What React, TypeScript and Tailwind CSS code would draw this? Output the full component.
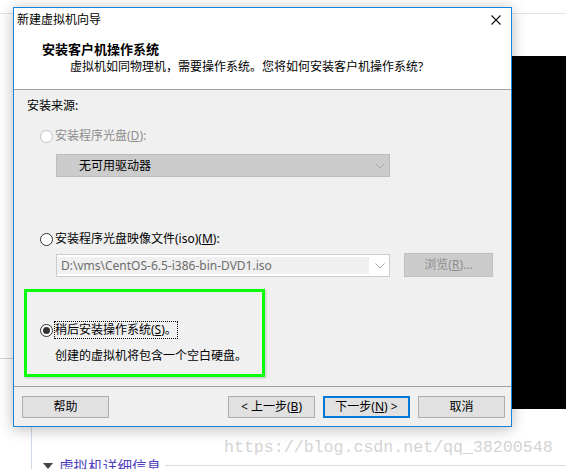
const sans = "font-['Noto_Sans','Noto_Sans_CJK_SC',sans-serif]";

function Radio({ checked = false, disabled = false }: { checked?: boolean; disabled?: boolean }) {
  return (
    <span
      className={`flex h-[13px] w-[13px] shrink-0 items-center justify-center rounded-full border bg-white ${
        disabled ? "border-[#c2c2c2]" : "border-[#333333]"
      }`}
    >
      {checked && <span className="h-[7px] w-[7px] rounded-full bg-[#333333]" />}
    </span>
  );
}

function Chevron() {
  return (
    <svg width="10" height="6" viewBox="0 0 10 6" className="shrink-0">
      <path d="M0.5 0.5 L5 5 L9.5 0.5" fill="none" stroke="#a8a8a8" strokeWidth="1" />
    </svg>
  );
}

function Button({ label, primary = false, className = "" }: { label: React.ReactNode; primary?: boolean; className?: string }) {
  return (
    <div
      className={`flex h-[22px] w-[87px] items-center justify-center bg-[#e1e1e1] text-[12px] text-black ${
        primary ? "border-2 border-[#0078d7]" : "border border-[#adadad]"
      } ${className}`}
    >
      {label}
    </div>
  );
}

export default function App() {
  return (
    <div className={`relative h-[469px] w-[566px] overflow-hidden bg-white ${sans}`}>
      {/* page behind the wizard */}
      <div className="absolute left-0 top-[13px] h-px w-full bg-[#dde4ec]" />
      <div className="absolute left-0 top-[358px] h-px w-[14px] bg-[#d6d6d6]" />
      <div className="absolute left-[400px] top-[56px] h-[353px] w-[166px] bg-black" />
      <div className="absolute left-[31px] top-[400px] h-[69px] w-px bg-[#cfd9e6]" />
      <div className="absolute left-[165px] top-[465px] h-px w-[401px] bg-[#dcdcdc]" />
      <div className="absolute left-[224px] top-[437px] font-['Liberation_Mono',monospace] text-[16.6px] leading-[22px] text-[#d4d4d4]">
        https://blog.csdn.net/qq_38200548
      </div>
      <div className="absolute left-[43px] top-[456px] flex items-center gap-[6px]">
        <svg width="10" height="6" viewBox="0 0 10 6">
          <path d="M0 0 H10 L5 6 Z" fill="#444444" />
        </svg>
        <span className="text-[14.6px] leading-[20px] text-[#4d3fc0]">虚拟机详细信息</span>
      </div>

      {/* wizard window */}
      <div className="absolute left-[13px] top-[7px] flex h-[420px] w-[499px] flex-col border border-[#1883d7] bg-[#f0f0f0] text-[12px] leading-[16px] text-black shadow-[0_2px_14px_rgba(0,0,0,0.28)]">
        <div className="flex h-[81px] flex-col bg-white">
          <div className="flex h-[23px] items-center justify-between pl-[3px] pr-[10px] leading-[23px]">
            <span>新建虚拟机向导</span>
            <svg width="10" height="10" viewBox="0 0 10 10" className="mt-px">
              <path d="M0.5 0.5 L9.5 9.5 M9.5 0.5 L0.5 9.5" stroke="#111111" strokeWidth="1.1" />
            </svg>
          </div>
          <div className="mt-[10px] pl-[28px] text-[13px] font-bold">安装客户机操作系统</div>
          <div className="mt-[2px] pl-[56px]">虚拟机如同物理机，需要操作系统。您将如何安装客户机操作系统?</div>
        </div>
        <div className="h-px bg-[#a0a0a0]" />

        <div className="mt-[8px] pl-[13px]">安装来源:</div>

        <div className="mt-[14px] flex items-center gap-[2px] pl-[26px] text-[#8c8c8c]">
          <Radio disabled />
          <span>
            安装程序光盘(<u>D</u>):
          </span>
        </div>

        <div className="ml-[42px] mt-[10px] flex h-[23px] w-[334px] items-center justify-between border border-[#bcbcbc] bg-[#cccccc] pl-[22px] pr-[4px]">
          <span>无可用驱动器</span>
          <Chevron />
        </div>

        <div className="mt-[54px] flex items-center gap-[2px] pl-[26px]">
          <Radio />
          <span>
            安装程序光盘映像文件(iso)(<u>M</u>):
          </span>
        </div>

        <div className="mt-[6px] flex items-center pl-[42px]">
          <div className="mt-px flex h-[23px] w-[334px] items-center border border-[#cccccc] bg-white pr-[4px]">
            <div className="my-[2px] flex h-[17px] w-[312px] items-center bg-[#f0f0f0] pl-[4px] text-[#6d6d6d]">
              D:\vms\CentOS-6.5-i386-bin-DVD1.iso
            </div>
            <span className="flex-1" />
            <Chevron />
          </div>
          <div className="ml-[14px] flex h-[24px] w-[89px] items-center justify-center border border-[#bfbfbf] bg-[#cccccc] text-[#8c8c8c]">
            浏览(<u>R</u>)...
          </div>
        </div>

        <div className="ml-[10px] mt-[12px] h-[88px] w-[241px] border-[3px] border-[#0aff0a] shadow-[1px_1px_2px_rgba(0,0,0,0.2)]">
          <div className="mt-[30px] flex items-center gap-[2px] pl-[13px]">
            <Radio checked />
            <span className="outline-1 outline-dotted outline-black">
              稍后安装操作系统(<u>S</u>)。
            </span>
          </div>
          <div className="mt-[10px] pl-[28px]">创建的虚拟机将包含一个空白硬盘。</div>
        </div>

        <div className="mt-[9px] h-px bg-[#a0a0a0]" />

        <div className="mt-[9px] flex items-center">
          <Button label="帮助" className="ml-[8px] w-[86px]" />
          <Button
            label={
              <span>
                &lt; 上一步(<u>B</u>)
              </span>
            }
            className="ml-[119px]"
          />
          <Button
            label={
              <span>
                下一步(<u>N</u>) &gt;
              </span>
            }
            primary
            className="ml-[8px]"
          />
          <Button label="取消" className="ml-[8px]" />
        </div>
      </div>
    </div>
  );
}
